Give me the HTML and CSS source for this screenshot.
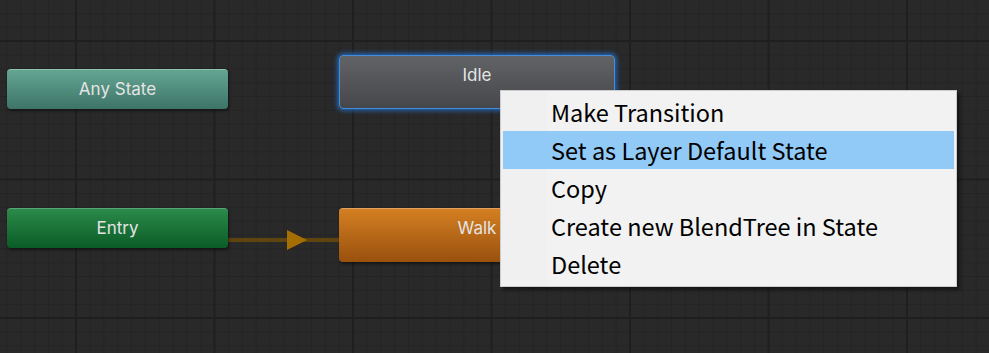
FILE: index.html
```html
<!DOCTYPE html>
<html lang="en">
<head>
    <meta charset="UTF-8">
    <title>Animator</title>
    <link rel="stylesheet" href="styles.css">
</head>
<body>
    <div class="graph">
        <!-- transition Entry -> Walk -->
        <svg class="link" width="112" height="22" viewBox="0 0 112 22">
            <rect x="0" y="9" width="112" height="4" fill="#5f4410"/>
            <polygon points="59,1 79,11 59,21" fill="#a46e02"/>
        </svg>

        <div class="node any">Any State</div>
        <div class="node idle selected">Idle</div>
        <div class="node entry">Entry</div>
        <div class="node walk">Walk</div>

        <ul class="menu">
            <li>Make Transition</li>
            <li class="active">Set as Layer Default State</li>
            <li>Copy</li>
            <li>Create new BlendTree in State</li>
            <li>Delete</li>
        </ul>
    </div>
</body>
</html>
```

FILE: styles.css
```css
body {
    margin: 0;
    background: #282828;
    font-family: 'Inter', 'Noto Sans', sans-serif;
}

.graph {
    position: relative;
    width: 989px;
    height: 353px;
    overflow: hidden;
    background-color: #292929;
    background-image:
        linear-gradient(to right, #1f1f1f 2px, transparent 2px),
        linear-gradient(to bottom, #1f1f1f 2px, transparent 2px),
        linear-gradient(to right, #242424 1px, transparent 1px),
        linear-gradient(to bottom, #242424 1px, transparent 1px);
    background-size: 138.5px 138.5px, 138.5px 138.5px, 13.85px 13.85px, 13.85px 13.85px;
    background-position: 75px 40px, 75px 40px, 6.5px 13px, 6.5px 13px;
}

.node {
    position: absolute;
    width: 221px;
    height: 40px;
    box-sizing: border-box;
    border-radius: 4px;
    color: #e4e4e4;
    font-size: 17px;
    line-height: 38px;
    text-align: center;
    box-shadow: 1px 2px 3px rgba(0, 0, 0, 0.45);
}

.any {
    left: 7px;
    top: 69px;
    background: linear-gradient(#64a592, #3d7468);
    border-top: 1px solid #8cc2b2;
}

.entry {
    left: 7px;
    top: 208px;
    background: linear-gradient(#2b8a4a, #0a5c26);
    border-top: 1px solid #5aa676;
}

.idle {
    left: 339px;
    top: 55px;
    width: 276px;
    height: 54px;
    background: linear-gradient(#616367, #45474b);
}

.selected {
    border: 1px solid #3d8fe0;
    box-shadow: 0 0 4px 2px rgba(40, 120, 215, 0.7);
}

.walk {
    left: 339px;
    top: 208px;
    width: 276px;
    height: 54px;
    background: linear-gradient(#d47f22, #99510e);
    border-top: 1px solid #e3a060;
}

.link {
    position: absolute;
    left: 228px;
    top: 229px;
}

.menu {
    position: absolute;
    left: 500px;
    top: 90px;
    width: 457px;
    margin: 0;
    padding: 2px 2px 3px;
    box-sizing: border-box;
    list-style: none;
    background: linear-gradient(to right, #f0f0f0 46px, #f2f2f2 46px);
    border: 1px solid #cccccc;
    box-shadow: 3px 3px 3px rgba(0, 0, 0, 0.45);
    font-family: 'Noto Sans CJK KR', 'Noto Sans', sans-serif;
    font-size: 23.5px;
    color: #000;
}

.menu li {
    height: 38px;
    line-height: 38px;
    padding-left: 48px;
    white-space: nowrap;
}

.menu li.active {
    background: #91c9f7;
}
```
